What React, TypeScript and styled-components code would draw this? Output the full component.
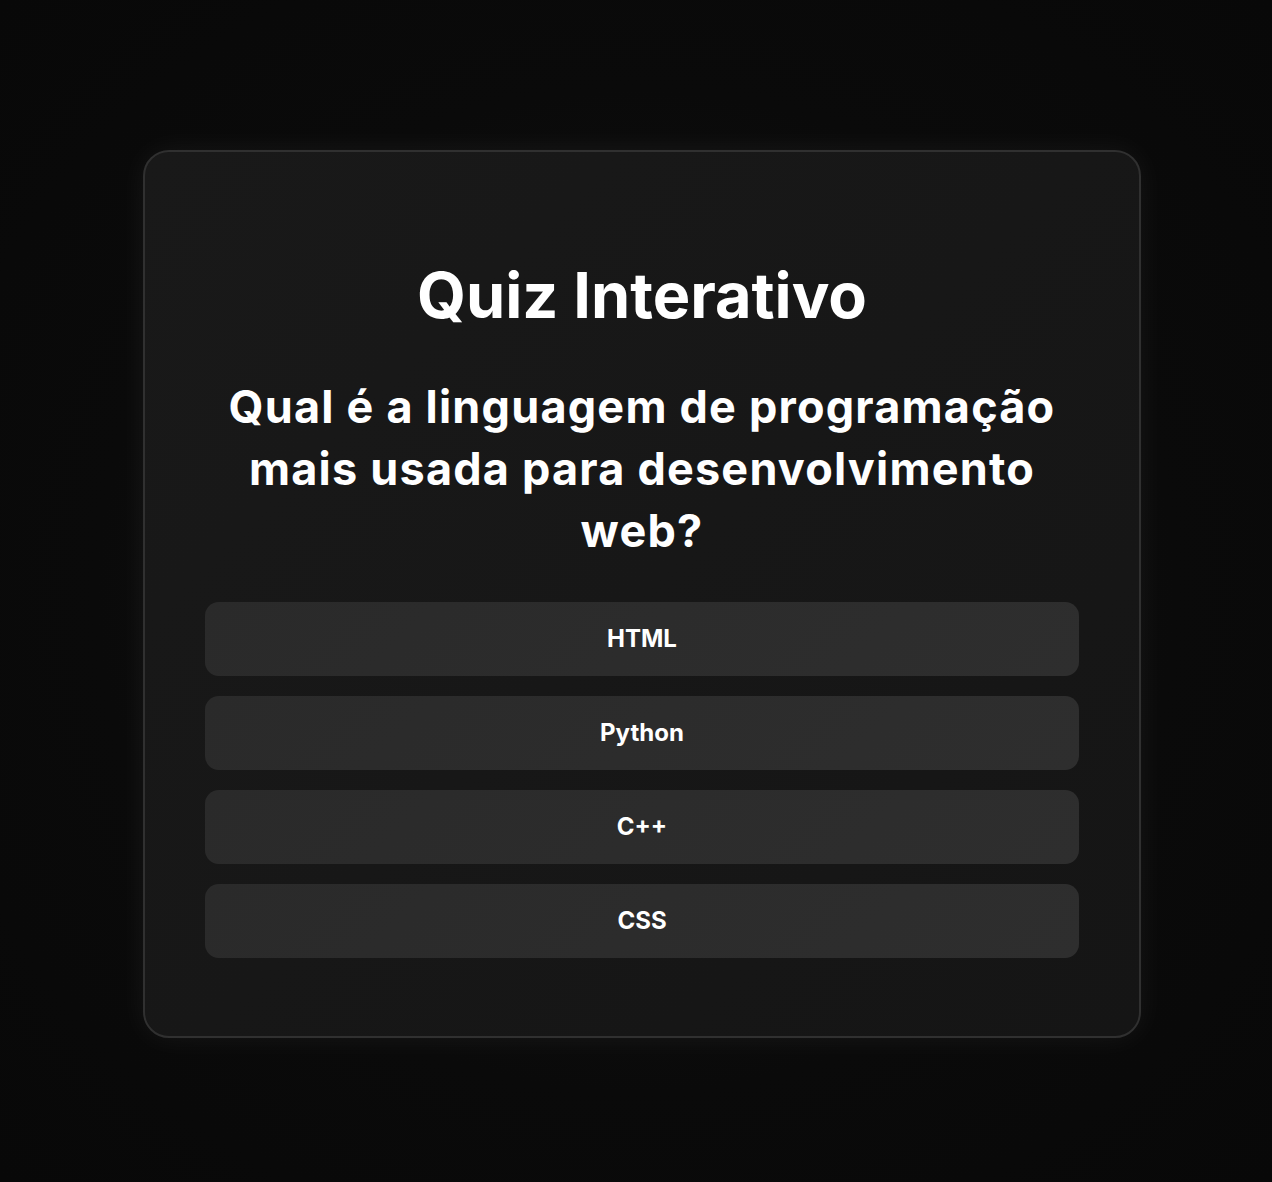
import styled, { createGlobalStyle } from "styled-components";

const GlobalStyle = createGlobalStyle`
  * { box-sizing: border-box; }
  html, body {
    margin: 0;
    padding: 0;
    background: #0a0a0a;
    font-family: Inter, "Noto Sans", sans-serif;
    color: #ffffff;
  }
`;

const Page = styled.div`
  min-height: 100vh;
  display: flex;
  align-items: center;
  justify-content: center;
  padding: 6px 0 0 12px;
  background: radial-gradient(ellipse at center, #131313 0%, #0a0a0a 60%, #080808 100%);
`;

const Card = styled.div`
  width: 998px;
  height: 888px;
  padding: 60px;
  border: 2px solid #303030;
  border-radius: 26px;
  background: linear-gradient(135deg, #191919 0%, #151515 100%);
  box-shadow: 0 0 30px rgba(255, 255, 255, 0.06);
  display: flex;
  flex-direction: column;
  align-items: center;
`;

const Title = styled.h1`
  margin: 46px 0 0;
  font-size: 63px;
  font-weight: 700;
  line-height: 1.2;
  text-align: center;
`;

const Question = styled.h2`
  margin: 42px 0 0;
  font-size: 45px;
  font-weight: 700;
  line-height: 62px;
  letter-spacing: 1.2px;
  text-align: center;
  max-width: 876px;
`;

const Options = styled.div`
  margin-top: 40px;
  width: 100%;
  display: flex;
  flex-direction: column;
  gap: 20px;
`;

const Option = styled.button`
  height: 74px;
  width: 100%;
  border: none;
  border-radius: 14px;
  background: linear-gradient(135deg, #2a2a2a 0%, #2e2e2e 100%);
  color: #ffffff;
  font-family: Inter, "Noto Sans", sans-serif;
  font-size: 24px;
  font-weight: 700;
  cursor: pointer;
`;

const answers = ["HTML", "Python", "C++", "CSS"];

export default function App() {
  return (
    <>
      <GlobalStyle />
      <Page>
        <Card>
          <Title>Quiz Interativo</Title>
          <Question>
            Qual é a linguagem de programação mais usada para desenvolvimento web?
          </Question>
          <Options>
            {answers.map((a) => (
              <Option key={a}>{a}</Option>
            ))}
          </Options>
        </Card>
      </Page>
    </>
  );
}
